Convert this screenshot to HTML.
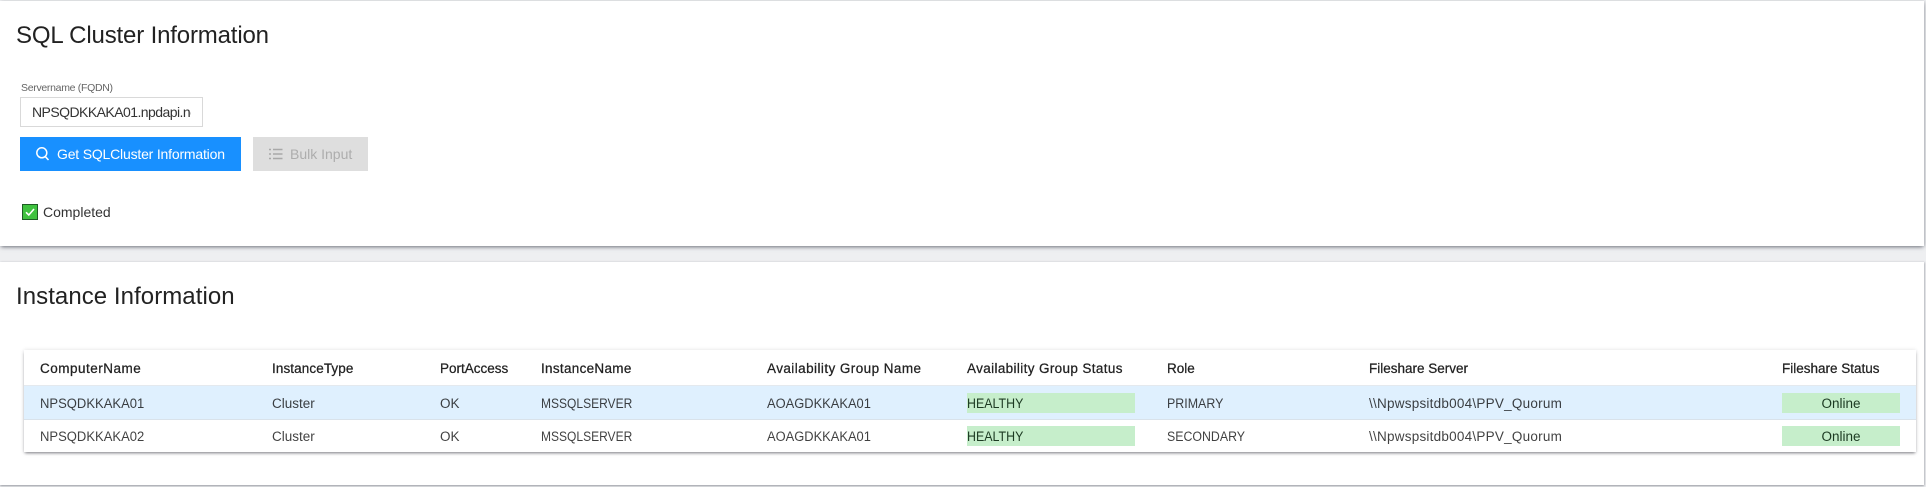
<!DOCTYPE html>
<html lang="en">
<head>
<meta charset="utf-8">
<title>SQL Cluster Information</title>
<style>
html,body{margin:0;padding:0}
body{width:1926px;height:487px;position:relative;overflow:hidden;background:#eeeff1;font-family:"Liberation Sans",sans-serif;color:rgba(0,0,0,.75)}
.a{position:absolute;white-space:nowrap}
.card{position:absolute;left:0;width:1924px;background:#fff}
.t{font-size:13.5px;line-height:18px}
.h{font-size:13.5px;line-height:18px;font-weight:400;color:#222;-webkit-text-stroke:.25px #222}
.g{position:absolute;background:#c6eecb}
.sx{transform-origin:0 50%}
</style>
</head>
<body>
<div class="card" style="top:1px;height:245px;box-shadow:0 2px 4px -1px rgba(40,44,60,.6),1px 0 3px rgba(40,44,60,.15)"></div>
<div class="card" style="top:262px;height:223px;box-shadow:0 1px 2px rgba(40,44,60,.4),1px 0 2px rgba(40,44,60,.12)"></div>

<div class="a" style="left:16px;top:21px;font-size:24px;line-height:30px;color:#222;letter-spacing:-.16px">SQL Cluster Information</div>
<div class="a" style="left:21px;top:82px;font-size:10.5px;line-height:13px;color:#666;letter-spacing:-.3px">Servername (FQDN)</div>
<div class="a" style="left:20px;top:97px;width:181px;height:28px;border:1px solid #d9d9d9;background:#fff"></div>
<div class="a" style="left:32px;top:103px;width:159px;overflow:hidden;font-size:14px;line-height:18px;color:#333;letter-spacing:-.55px">NPSQDKKAKA01.npdapi.net</div>

<div class="a" style="left:20px;top:137px;width:221px;height:34px;background:#1890ff"></div>
<svg class="a" style="left:35px;top:146px" width="15" height="16" viewBox="0 0 15 16" fill="none" stroke="#fff" stroke-width="1.5"><circle cx="6.8" cy="6.8" r="5"/><path d="M10.5 10.8l3 3.2"/></svg>
<div class="a" style="left:57px;top:145px;font-size:14px;line-height:18px;color:#fff;letter-spacing:-.19px">Get SQLCluster Information</div>

<div class="a" style="left:253px;top:137px;width:115px;height:34px;background:#dedede"></div>
<svg class="a" style="left:269px;top:148px" width="14" height="12" viewBox="0 0 14 12" fill="none" stroke="#a8a8a8" stroke-width="1.4"><path d="M0 1.5h2M4 1.5h9.5M0 6h2M4 6h9.5M0 10.500h2M4 10.500h9.500"/></svg>
<div class="a" style="left:290px;top:145px;font-size:14px;line-height:18px;color:#adadad">Bulk Input</div>

<svg class="a" style="left:22px;top:204px" width="16" height="16" viewBox="0 0 16 16"><rect x=".5" y=".5" width="15" height="15" fill="#3fc23f" stroke="#1d5c24"/><path d="M4 8.300l2.800 2.700L12 5" fill="none" stroke="#fff" stroke-width="1.600"/></svg>
<div class="a" style="left:43px;top:203px;font-size:14px;line-height:18px;color:#333">Completed</div>

<div class="a" style="left:16px;top:282px;font-size:24px;line-height:30px;color:#222;letter-spacing:.06px">Instance Information</div>

<div class="a" style="left:24px;top:350px;width:1892px;height:102px;background:#fff;box-shadow:0 2px 3px -1px rgba(30,30,40,.55),0 0 4px rgba(30,30,40,.12)"></div>
<div class="a" style="left:24px;top:386px;width:1892px;height:33px;background:#dff0fe"></div>
<div class="a" style="left:24px;top:419px;width:1892px;height:1px;background:#d9e2ea"></div>
<div class="a" style="left:24px;top:385px;width:1892px;height:1px;background:#e4e9ee"></div>

<div class="g" style="left:967px;top:393px;width:168px;height:20px"></div>
<div class="g" style="left:967px;top:426px;width:168px;height:20px"></div>
<div class="g" style="left:1782px;top:393px;width:118px;height:20px"></div>
<div class="g" style="left:1782px;top:426px;width:118px;height:20px"></div>

<div class="a h" style="left:40px;top:359.500px;letter-spacing:.5px">ComputerName</div>
<div class="a h" style="left:272px;top:359.500px;letter-spacing:.1px">InstanceType</div>
<div class="a h" style="left:440px;top:359.500px">PortAccess</div>
<div class="a h" style="left:541px;top:359.500px;letter-spacing:.3px">InstanceName</div>
<div class="a h" style="left:767px;top:359.500px;letter-spacing:.43px">Availability Group Name</div>
<div class="a h" style="left:967px;top:359.500px;letter-spacing:.36px">Availability Group Status</div>
<div class="a h" style="left:1167px;top:359.500px">Role</div>
<div class="a h" style="left:1369px;top:359.500px">Fileshare Server</div>
<div class="a h" style="left:1782px;top:359.500px">Fileshare Status</div>

<div class="a t sx" style="left:40px;top:395px;transform:scaleX(.965)">NPSQDKKAKA01</div>
<div class="a t" style="left:272px;top:395px">Cluster</div>
<div class="a t" style="left:440px;top:395px">OK</div>
<div class="a t sx" style="left:541px;top:395px;transform:scaleX(.89)">MSSQLSERVER</div>
<div class="a t sx" style="left:767px;top:395px;transform:scaleX(.955)">AOAGDKKAKA01</div>
<div class="a t sx" style="left:967px;top:395px;color:#1c3a22;transform:scaleX(.92)">HEALTHY</div>
<div class="a t sx" style="left:1167px;top:395px;transform:scaleX(.92)">PRIMARY</div>
<div class="a t" style="left:1369px;top:395px;letter-spacing:.24px">\\Npwspsitdb004\PPV_Quorum</div>
<div class="a t" style="left:1782px;top:395px;width:118px;text-align:center;color:#1c3a22">Online</div>

<div class="a t sx" style="left:40px;top:428px;transform:scaleX(.965)">NPSQDKKAKA02</div>
<div class="a t" style="left:272px;top:428px">Cluster</div>
<div class="a t" style="left:440px;top:428px">OK</div>
<div class="a t sx" style="left:541px;top:428px;transform:scaleX(.89)">MSSQLSERVER</div>
<div class="a t sx" style="left:767px;top:428px;transform:scaleX(.955)">AOAGDKKAKA01</div>
<div class="a t sx" style="left:967px;top:428px;color:#1c3a22;transform:scaleX(.92)">HEALTHY</div>
<div class="a t sx" style="left:1167px;top:428px;transform:scaleX(.915)">SECONDARY</div>
<div class="a t" style="left:1369px;top:428px;letter-spacing:.24px">\\Npwspsitdb004\PPV_Quorum</div>
<div class="a t" style="left:1782px;top:428px;width:118px;text-align:center;color:#1c3a22">Online</div>
</body>
</html>
